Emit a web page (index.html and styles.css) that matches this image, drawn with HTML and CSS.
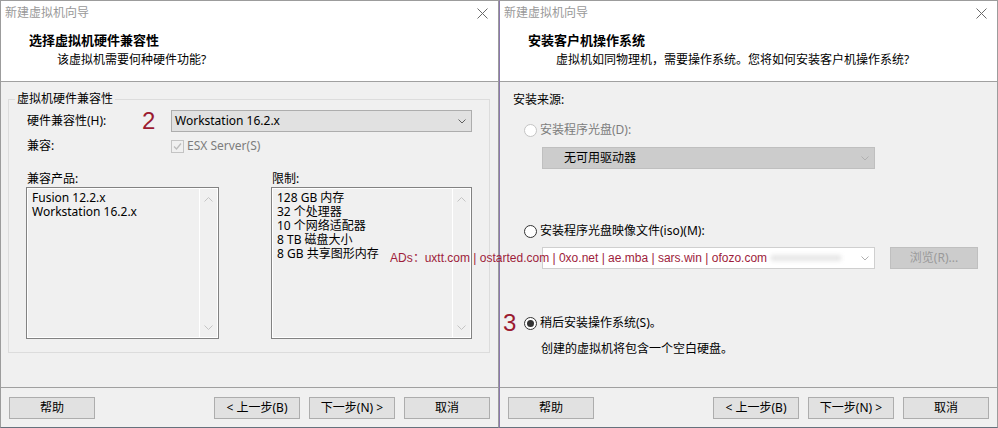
FILE: index.html
```html
<!DOCTYPE html>
<html lang="zh-CN">
<head>
    <meta charset="UTF-8">
    <title>新建虚拟机向导</title>
    <link rel="stylesheet" href="styles.css">
</head>
<body>
<div class="screen">

    <!-- 向导第一页：硬件兼容性 -->
    <div class="dialog">
        <div class="titlebar">
            <span>新建虚拟机向导</span>
            <svg class="close" width="11" height="11" viewBox="0 0 11 11"><path d="M0.5 0.5L10.5 10.5M10.5 0.5L0.5 10.5" stroke="#6a6a6a" fill="none"/></svg>
        </div>
        <div class="header">
            <h2>选择虚拟机硬件兼容性</h2>
            <p>该虚拟机需要何种硬件功能?</p>
        </div>
        <div class="body">
            <fieldset class="group">
                <legend>虚拟机硬件兼容性</legend>
                <div class="group-inner">
                    <div class="row-hw">
                        <span class="lbl-hw">硬件兼容性(H):</span>
                        <span class="step">2</span>
                        <div class="combo">
                            <span>Workstation 16.2.x</span>
                            <svg width="8" height="5" viewBox="0 0 8 5"><path d="M0.5 0.5L4 4L7.5 0.5" stroke="#606060" fill="none"/></svg>
                        </div>
                    </div>
                    <div class="row-compat">
                        <span class="lbl-compat">兼容:</span>
                        <span class="check">
                            <svg width="11" height="11" viewBox="0 0 11 11"><path d="M2 5.5L4.5 8L9 2.5" stroke="#bcbcbc" stroke-width="1.3" fill="none"/></svg>
                        </span>
                        <span class="grey">ESX Server(S)</span>
                    </div>
                    <div class="lists">
                        <div class="list-col col-products">
                            <div class="list-title">兼容产品:</div>
                            <div class="listbox">
                                <ul>
                                    <li>Fusion 12.2.x</li>
                                    <li>Workstation 16.2.x</li>
                                </ul>
                                <div class="vscroll">
                                    <svg width="9" height="5" viewBox="0 0 9 5"><path d="M0.5 4.5L4.5 0.5L8.5 4.5" stroke="#c4c4c4" fill="none"/></svg>
                                    <svg width="9" height="5" viewBox="0 0 9 5"><path d="M0.5 0.5L4.5 4.5L8.5 0.5" stroke="#c4c4c4" fill="none"/></svg>
                                </div>
                            </div>
                        </div>
                        <div class="list-col col-limits">
                            <div class="list-title">限制:</div>
                            <div class="listbox">
                                <ul>
                                    <li>128 GB 内存</li>
                                    <li>32 个处理器</li>
                                    <li>10 个网络适配器</li>
                                    <li>8 TB 磁盘大小</li>
                                    <li>8 GB 共享图形内存</li>
                                </ul>
                                <div class="vscroll">
                                    <svg width="9" height="5" viewBox="0 0 9 5"><path d="M0.5 4.5L4.5 0.5L8.5 4.5" stroke="#c4c4c4" fill="none"/></svg>
                                    <svg width="9" height="5" viewBox="0 0 9 5"><path d="M0.5 0.5L4.5 4.5L8.5 0.5" stroke="#c4c4c4" fill="none"/></svg>
                                </div>
                            </div>
                        </div>
                    </div>
                </div>
            </fieldset>
        </div>
        <div class="footer">
            <button class="btn">帮助</button>
            <div class="btn-group">
                <button class="btn">&lt; 上一步(B)</button>
                <button class="btn">下一步(N) &gt;</button>
                <button class="btn">取消</button>
            </div>
        </div>
    </div>

    <!-- 向导第二页：客户机操作系统 -->
    <div class="dialog dialog-right">
        <div class="titlebar">
            <span>新建虚拟机向导</span>
            <svg class="close" width="11" height="11" viewBox="0 0 11 11"><path d="M0.5 0.5L10.5 10.5M10.5 0.5L0.5 10.5" stroke="#6a6a6a" fill="none"/></svg>
        </div>
        <div class="header">
            <h2>安装客户机操作系统</h2>
            <p>虚拟机如同物理机，需要操作系统。您将如何安装客户机操作系统?</p>
        </div>
        <div class="body body-os">
            <div class="src-title">安装来源:</div>

            <div class="opt opt-disc">
                <span class="radio radio-off"></span>
                <span class="grey">安装程序光盘(D):</span>
            </div>
            <div class="combo combo-disabled combo-disc">
                <span>无可用驱动器</span>
                <svg width="8" height="5" viewBox="0 0 8 5"><path d="M0.5 0.5L4 4L7.5 0.5" stroke="#b0b0b0" fill="none"/></svg>
            </div>

            <div class="opt opt-iso">
                <span class="radio"></span>
                <span>安装程序光盘映像文件(iso)(M):</span>
            </div>
            <div class="iso-row">
                <div class="combo combo-iso">
                    <span class="smudge"></span>
                    <svg width="8" height="5" viewBox="0 0 8 5"><path d="M0.5 0.5L4 4L7.5 0.5" stroke="#b0b0b0" fill="none"/></svg>
                </div>
                <button class="btn btn-browse">浏览(R)...</button>
            </div>

            <div class="opt opt-later">
                <span class="step step-3">3</span>
                <span class="radio radio-on"></span>
                <span>稍后安装操作系统(S)。</span>
            </div>
            <div class="later-desc">创建的虚拟机将包含一个空白硬盘。</div>
        </div>
        <div class="footer">
            <button class="btn">帮助</button>
            <div class="btn-group">
                <button class="btn">&lt; 上一步(B)</button>
                <button class="btn">下一步(N) &gt;</button>
                <button class="btn">取消</button>
            </div>
        </div>
    </div>

    <!-- 截图上的水印 -->
    <div class="ads">ADs：uxtt.com | ostarted.com | 0xo.net | ae.mba | sars.win | ofozo.com</div>
</div>
</body>
</html>
```

FILE: styles.css
```css
/* 基础 */
* {
    box-sizing: border-box;
}

body {
    margin: 0;
    font-family: "Noto Sans", "Noto Sans CJK SC", sans-serif;
    font-size: 12px;
    line-height: 16px;
    color: #000;
    background: #fff;
}

.screen {
    position: relative;
    display: flex;
    width: 998px;
    height: 428px;
    overflow: hidden;
}

/* 对话框外框 */
.dialog {
    width: 499px;
    height: 428px;
    display: flex;
    flex-direction: column;
    background: #f0f0f0;
    border: 1px solid #9c9c9c;
    border-bottom-color: #66717c;
}

.dialog-right {
    border-left-color: #8a78ac;
}

.titlebar {
    height: 26px;
    display: flex;
    align-items: center;
    justify-content: space-between;
    padding: 0 10px 2px 4px;
    background: #fff;
    color: #999;
}

.header {
    height: 55px;
    background: #fff;
    border-bottom: 1px solid #a0a0a0;
    padding: 5px 0 0 28px;
}

.header h2 {
    margin: 0;
    font-size: 13px;
    font-weight: bold;
    line-height: 16px;
}

.header p {
    margin: 4px 0 0 28px;
}

.body {
    flex: 1;
}

.footer {
    height: 40px;
    border-top: 1px solid #a0a0a0;
    display: flex;
    justify-content: space-between;
    padding: 9px 8px 0 8px;
}

.btn-group {
    display: flex;
    gap: 9px;
}

.btn {
    width: 86px;
    height: 22px;
    padding: 0;
    background: #e1e1e1;
    border: 1px solid #adadad;
    font: inherit;
    color: #000;
}

/* 硬件兼容性分组 */
.group {
    margin: 9px 8px 0 7px;
    padding: 0;
    border: 1px solid #dcdcdc;
    min-width: 0;
}

.group legend {
    margin-left: 6px;
    padding: 0 2px;
    line-height: 16px;
}

.group-inner {
    padding: 0 0 13px 18px;
}

.row-hw {
    display: flex;
    align-items: center;
    height: 22px;
    margin-top: 3px;
}

.lbl-hw {
    width: 115px;
}

.step {
    width: 29px;
    font-family: "Liberation Sans", sans-serif;
    font-size: 24px;
    line-height: 22px;
    color: #9b1b30;
}

.combo {
    display: flex;
    align-items: center;
    justify-content: space-between;
    width: 301px;
    height: 22px;
    padding: 0 5px 0 3px;
    background: #e1e1e1;
    border: 1px solid #adadad;
}

.row-compat {
    display: flex;
    align-items: center;
    height: 16px;
    margin-top: 6px;
}

.lbl-compat {
    width: 144px;
}

.check {
    width: 13px;
    height: 13px;
    margin-right: 3px;
    border: 1px solid #c4c4c4;
    display: flex;
    align-items: center;
    justify-content: center;
}

.grey {
    color: #7d7d7d;
}

.lists {
    display: flex;
    margin-top: 17px;
    margin-left: -1px;
}

.col-products {
    width: 193px;
}

.col-limits {
    width: 201px;
    margin-left: 52px;
}

.list-title {
    padding-left: 1px;
}

.listbox {
    display: flex;
    height: 152px;
    border: 1px solid #828282;
    box-shadow: inset 0 0 0 1px #fff;
}

.listbox ul {
    flex: 1;
    margin: 0;
    padding: 3px 0 0 5px;
    list-style: none;
    line-height: 14px;
}

.vscroll {
    width: 18px;
    margin: 1px 1px 1px 0;
    border-left: 1px solid #fff;
    display: flex;
    flex-direction: column;
    align-items: center;
    justify-content: space-between;
    padding: 8px 0 7px;
}

/* 安装来源 */
.body-os {
    padding: 10px 0 0 13px;
}

.opt {
    display: flex;
    align-items: center;
    height: 16px;
    margin-left: 11px;
}

.opt-disc {
    margin-top: 14px;
}

.opt-iso {
    margin-top: 54px;
}

.opt-later {
    height: 24px;
    margin-top: 42px;
    margin-left: -10px;
}

.step-3 {
    width: 21px;
    line-height: 24px;
}

.radio {
    width: 13px;
    height: 13px;
    margin-right: 3px;
    border: 1px solid #333;
    border-radius: 50%;
    background: #fff;
    display: flex;
    align-items: center;
    justify-content: center;
}

.radio-off {
    border-color: #c4c4c4;
}

.radio-on::after {
    content: "";
    width: 7px;
    height: 7px;
    border-radius: 50%;
    background: #333;
}

.combo-disc {
    width: 333px;
    margin: 9px 0 0 29px;
    padding-left: 21px;
}

.combo-disabled {
    background: #cccccc;
    border-color: #bfbfbf;
}

.iso-row {
    display: flex;
    gap: 15px;
    margin: 8px 0 0 29px;
}

.combo-iso {
    width: 333px;
    background: #fff;
    border-color: #cfcfcf;
    padding-left: 12px;
}

/* 路径被打码的部分 */
.smudge {
    width: 70px;
    height: 6px;
    margin-left: 216px;
    background: #e6e6e6;
    filter: blur(2px);
}

.btn-browse {
    width: 88px;
    background: #cccccc;
    border-color: #bfbfbf;
    color: #9a9a9a;
}

.later-desc {
    margin: 6px 0 0 28px;
}

/* 水印 */
.ads {
    position: absolute;
    left: 390px;
    top: 250px;
    font-family: "Liberation Sans", sans-serif;
    font-size: 12px;
    line-height: 16px;
    color: #9e1d3b;
    white-space: nowrap;
}
```
